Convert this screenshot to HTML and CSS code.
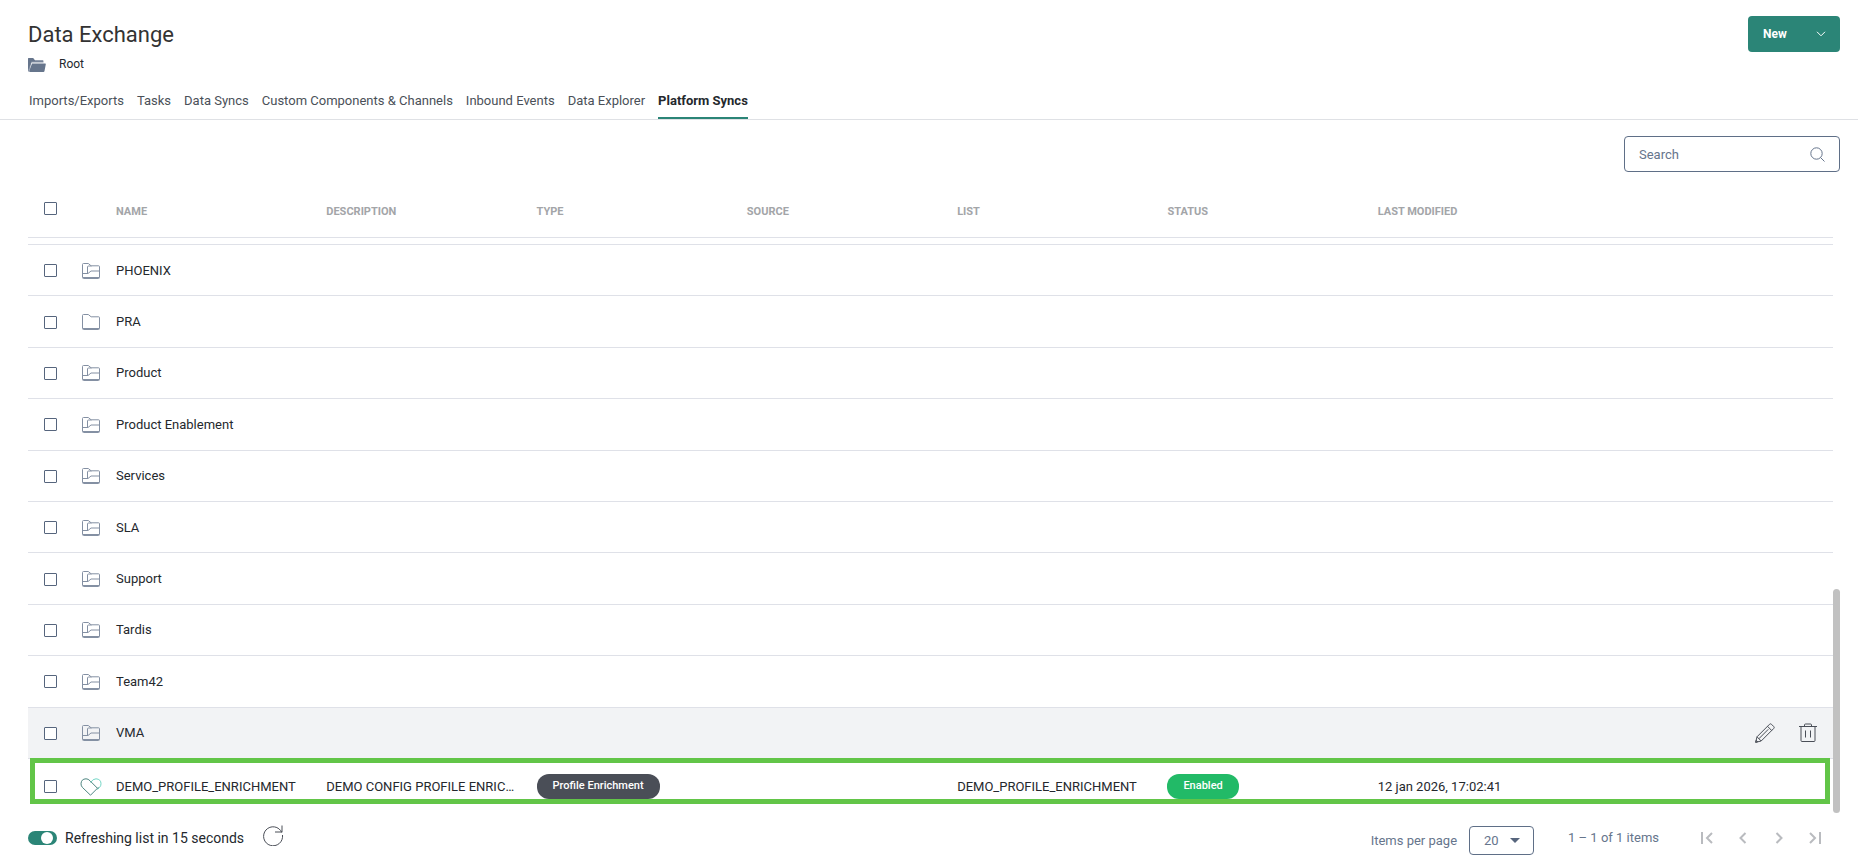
FILE: index.html
```html
<!DOCTYPE html>
<html lang="en">
<head>
    <meta charset="utf-8">
    <title>Data Exchange</title>
    <link rel="stylesheet" href="styles.css">
</head>
<body>

    <!-- Icons shared by the rows -->
    <svg class="sprite" aria-hidden="true">
        <symbol id="folder" viewBox="0 0 20 18">
            <path d="M1.500 15.500v-13q0-1 1-1h4.800l2.800 2.300h7.600q.8 0 .8.8v10.900q0 1-1 1h-15q-1 0-1-1z"/>
            <path d="M2 15.500h16"/>
        </symbol>
        <symbol id="folder-tree" viewBox="0 0 20 18">
            <path d="M1.500 15.500v-13q0-1 1-1h4.800l2.800 2.300h7.600q.8 0 .8.8v10.900q0 1-1 1h-15q-1 0-1-1z"/>
            <path d="M2 15.500h16M6.500 11v-6q0-1 1-1h3M1.500 11.500h5.500l3-2.500h8.500"/>
        </symbol>
    </svg>

    <header class="header">
        <div class="header-top">
            <div>
                <h1>Data Exchange</h1>
                <div class="path">
                    <svg width="18" height="14" viewBox="0 0 18 14"><path fill="#8793a6" d="M0 1q0-1 1-1h4l2 2.500h8.500v2h-12L1.500 12 1 14 0 13z"/><path fill="#66758c" d="M0 1q0-1 1-1h4l2 2.500h8v1H3.500L1 10 0 12zM4 5.500h13.200q.8 0 .6.800L16.500 13q-.2 1-1 1H2q-1 0-.8-1z"/></svg>
                    <span>Root</span>
                </div>
            </div>
            <div class="split">
                <button type="button" class="new">New</button>
                <button type="button" class="more" aria-label="More"><svg width="10" height="6" viewBox="0 0 10 6"><path d="M1 .8l4 4 4-4"/></svg></button>
            </div>
        </div>
        <nav class="tabs">
            <a href="#">Imports/Exports</a>
            <a href="#">Tasks</a>
            <a href="#">Data Syncs</a>
            <a href="#">Custom Components &amp; Channels</a>
            <a href="#">Inbound Events</a>
            <a href="#">Data Explorer</a>
            <a href="#" class="active">Platform Syncs</a>
        </nav>
    </header>

    <main class="main">
        <div class="search">
            <input type="text" placeholder="Search" aria-label="Search">
            <svg width="15" height="15" viewBox="0 0 15 15"><circle cx="6.500" cy="6.500" r="5.700"/><path d="M10.500 10.500l4 4"/></svg>
        </div>

        <div class="list">
            <table>
                <colgroup>
                    <col class="col-check"><col class="col-icon">
                    <col><col><col><col><col><col><col>
                    <col class="col-actions">
                </colgroup>
                <thead>
                    <tr>
                        <th class="check"><input type="checkbox" aria-label="Select all"></th>
                        <th></th>
                        <th>NAME</th>
                        <th>DESCRIPTION</th>
                        <th>TYPE</th>
                        <th>SOURCE</th>
                        <th>LIST</th>
                        <th>STATUS</th>
                        <th>LAST MODIFIED</th>
                        <th></th>
                    </tr>
                </thead>
                <tbody>
                    <tr class="clipped"><td colspan="10"></td></tr>
                    <tr>
                        <td class="check"><input type="checkbox" aria-label="PHOENIX"></td>
                        <td class="icon"><svg class="folder"><use href="#folder-tree"/></svg></td>
                        <td colspan="8">PHOENIX</td>
                    </tr>
                    <tr>
                        <td class="check"><input type="checkbox" aria-label="PRA"></td>
                        <td class="icon"><svg class="folder"><use href="#folder"/></svg></td>
                        <td colspan="8">PRA</td>
                    </tr>
                    <tr>
                        <td class="check"><input type="checkbox" aria-label="Product"></td>
                        <td class="icon"><svg class="folder"><use href="#folder-tree"/></svg></td>
                        <td colspan="8">Product</td>
                    </tr>
                    <tr>
                        <td class="check"><input type="checkbox" aria-label="Product Enablement"></td>
                        <td class="icon"><svg class="folder"><use href="#folder-tree"/></svg></td>
                        <td colspan="8">Product Enablement</td>
                    </tr>
                    <tr>
                        <td class="check"><input type="checkbox" aria-label="Services"></td>
                        <td class="icon"><svg class="folder"><use href="#folder-tree"/></svg></td>
                        <td colspan="8">Services</td>
                    </tr>
                    <tr>
                        <td class="check"><input type="checkbox" aria-label="SLA"></td>
                        <td class="icon"><svg class="folder"><use href="#folder-tree"/></svg></td>
                        <td colspan="8">SLA</td>
                    </tr>
                    <tr>
                        <td class="check"><input type="checkbox" aria-label="Support"></td>
                        <td class="icon"><svg class="folder"><use href="#folder-tree"/></svg></td>
                        <td colspan="8">Support</td>
                    </tr>
                    <tr>
                        <td class="check"><input type="checkbox" aria-label="Tardis"></td>
                        <td class="icon"><svg class="folder"><use href="#folder-tree"/></svg></td>
                        <td colspan="8">Tardis</td>
                    </tr>
                    <tr>
                        <td class="check"><input type="checkbox" aria-label="Team42"></td>
                        <td class="icon"><svg class="folder"><use href="#folder-tree"/></svg></td>
                        <td colspan="8">Team42</td>
                    </tr>
                    <tr class="hovered">
                        <td class="check"><input type="checkbox" aria-label="VMA"></td>
                        <td class="icon"><svg class="folder"><use href="#folder-tree"/></svg></td>
                        <td colspan="7">VMA</td>
                        <td>
                            <div class="actions">
                                <button type="button" aria-label="Edit"><svg width="20" height="20" viewBox="0 0 20 20"><path d="M.7 19.300l1.300-5.500L14.500 1.300q1-1 2 0l2.200 2.200q1 1 0 2L6.200 18zM2 13.800L6.200 18M12.500 3.300l4.200 4.200M3.800 15.800l9.500-9.500M.7 19.300l2-.5-1.500-1.500z"/></svg></button>
                                <button type="button" aria-label="Delete"><svg width="18" height="20" viewBox="0 0 18 20"><path d="M0 3.500h18M5.500 3.500v-1.500q0-1 1-1h5q1 0 1 1v1.500M2 3.500v14q0 1 1 1h12q1 0 1-1v-14M6.500 7.500v7M11.500 7.500v7"/></svg></button>
                            </div>
                        </td>
                    </tr>
                    <tr class="last">
                        <td class="check"><input type="checkbox" aria-label="DEMO_PROFILE_ENRICHMENT"></td>
                        <td class="icon"><svg class="heart" width="22" height="18" viewBox="0 0 22 18"><path stroke="#74d6c6" d="M10.500 4.500Q13 .8 16 .8q5 .4 5 5 0 2-1.500 3.700l-2 2"/><path stroke="#4d8580" d="M10.500 17.200L2.500 9.500Q1 8 1 5.800 1.200 1 6 .8q2.300 0 4 2l7.500 7.500M10.500 17.200l8-8"/></svg></td>
                        <td>DEMO_PROFILE_ENRICHMENT</td>
                        <td>DEMO CONFIG PROFILE ENRICHMENT</td>
                        <td><span class="badge">Profile Enrichment</span></td>
                        <td></td>
                        <td>DEMO_PROFILE_ENRICHMENT</td>
                        <td><span class="badge enabled">Enabled</span></td>
                        <td>12 jan 2026, 17:02:41</td>
                        <td></td>
                    </tr>
                </tbody>
            </table>
            <div class="scrollbar"></div>
            <div class="highlight"></div>
        </div>
    </main>

    <footer class="footer">
        <label class="refresh"><input type="checkbox" class="toggle" checked>Refreshing list in 15 seconds</label>
        <button type="button" class="reload" aria-label="Refresh"><svg width="22" height="22" viewBox="0 0 22 22"><path d="M19.800 8.500A9.500 9.500 0 1 0 20.500 11M20 1.500v6.500h-7"/></svg></button>
        <div class="paging">
            <label class="per-page">Items per page
                <span class="select"><select><option>20</option></select></span>
            </label>
            <span class="range">1 – 1 of 1 items</span>
            <div class="pages">
                <button type="button" aria-label="First page"><svg viewBox="0 0 12 12"><path d="M1 0v12M11 1L6 6l5 5"/></svg></button>
                <button type="button" aria-label="Previous page"><svg viewBox="0 0 12 12"><path d="M8.500 1l-5 5 5 5"/></svg></button>
                <button type="button" aria-label="Next page"><svg viewBox="0 0 12 12"><path d="M3.500 1l5 5-5 5"/></svg></button>
                <button type="button" aria-label="Last page"><svg viewBox="0 0 12 12"><path d="M11 0v12M1 1l5 5-5 5"/></svg></button>
            </div>
        </div>
    </footer>

</body>
</html>
```
FILE: styles.css
```css
* {
    box-sizing: border-box;
}

body {
    display: flex;
    flex-direction: column;
    height: 100vh;
    margin: 0;
    overflow: hidden;
    background: #fff;
    color: #24282d;
    font-family: Roboto, sans-serif;
    font-size: 13px;
}

button {
    padding: 0;
    border: none;
    background: none;
    font-family: inherit;
    cursor: pointer;
}

svg {
    display: block;
    fill: none;
}

.sprite {
    position: absolute;
    width: 0;
    height: 0;
}

/* Header */

.header {
    border-bottom: 1px solid #dfe1e5;
}

.header-top {
    display: flex;
    justify-content: space-between;
    height: 87px;
    padding: 16px 18px 0 28px;
}

h1 {
    margin: 5px 0 7px;
    color: #333;
    font-size: 22px;
    font-weight: 400;
    line-height: 28px;
}

.path {
    display: flex;
    align-items: center;
    gap: 13px;
    font-size: 12px;
    line-height: 17px;
}

.split {
    display: flex;
    height: 36px;
}

.split button {
    background: #2b8577;
    color: #fff;
    font-size: 12px;
    font-weight: 700;
}

.split .new {
    width: 54px;
    border-radius: 4px 0 0 4px;
}

.split .more {
    display: flex;
    align-items: center;
    justify-content: center;
    width: 38px;
    border-radius: 0 4px 4px 0;
}

.more svg {
    stroke: #fff;
}

.tabs {
    display: flex;
    gap: 13px;
    padding: 0 29px;
}

.tabs a {
    height: 32px;
    color: #4a5058;
    line-height: 28px;
    text-decoration: none;
}

.tabs .active {
    border-bottom: 2px solid #2b8577;
    color: #24282d;
    font-weight: 700;
}

/* List */

.main {
    display: flex;
    flex: 1;
    flex-direction: column;
    min-height: 0;
    padding: 16px 18px 0 28px;
}

.search {
    display: flex;
    align-items: center;
    align-self: flex-end;
    width: 216px;
    height: 36px;
    padding: 0 14px;
    border: 1px solid #5f6f87;
    border-radius: 4px;
}

.search input {
    flex: 1;
    min-width: 0;
    padding: 0;
    border: none;
    outline: none;
    font-family: inherit;
    font-size: 13px;
}

.search input::placeholder {
    color: #66758c;
}

.search svg {
    stroke: #66758c;
}

.list {
    position: relative;
    display: flex;
    flex: 1;
    min-height: 0;
    margin-top: 8px;
}

/* rows without a height of their own share what is left */
table {
    flex: 1;
    width: 100%;
    height: 100%;
    table-layout: fixed;
    border-collapse: separate;
    border-spacing: 0;
}

.col-check {
    width: 43px;
}

.col-icon {
    width: 37px;
}

.col-actions {
    width: 253px;
}

th,
td {
    padding: 0 8px;
    border-bottom: 1px solid #dfe1e8;
    text-align: left;
    vertical-align: middle;
    white-space: nowrap;
    overflow: hidden;
    text-overflow: ellipsis;
}

th {
    height: 58px;
    padding-top: 5px;
    color: #a3a5a8;
    font-size: 11px;
    font-weight: 700;
}

.check {
    padding: 1px 0 0 16px;
}

th.check {
    padding-top: 0;
}

.icon {
    padding: 1px 0 0 10px;
}

.check input {
    display: block;
    width: 13px;
    height: 13px;
    margin: 0;
    border: 1px solid #56657d;
    border-radius: 1px;
    background: #fff;
    appearance: none;
}

.clipped td {
    height: 7px;
}

.hovered td {
    background: #f2f3f5;
}

.last td {
    height: 54px;
    border-bottom: none;
}

.folder {
    width: 20px;
    height: 18px;
    stroke: #8490a3;
}

.last .icon {
    padding-left: 9px;
}

.actions {
    display: flex;
    align-items: center;
    justify-content: flex-end;
    gap: 24px;
    height: 18px;
    padding-right: 8px;
}

.hovered td:last-child {
    overflow: visible;
}

.actions svg {
    stroke: #4a4e57;
}

.badge {
    display: inline-block;
    height: 25px;
    padding: 0 16px;
    border-radius: 12px;
    background: #4a4e57;
    color: #fff;
    font-size: 11px;
    font-weight: 500;
    line-height: 23px;
    vertical-align: middle;
}

.badge.enabled {
    background: #22ba67;
}

.scrollbar {
    flex: none;
    align-self: flex-end;
    width: 7px;
    height: 224px;
    border-radius: 4px;
    background: #c1c1c1;
}

/* frame drawn over the last row */
.highlight {
    position: absolute;
    right: 10px;
    bottom: 9px;
    left: 2px;
    height: 46px;
    border: 5px solid #62c548;
    pointer-events: none;
}

/* Footer */

.footer {
    display: flex;
    align-items: flex-start;
    height: 42px;
    padding: 0 25px 0 28px;
}

.refresh {
    display: flex;
    align-items: center;
    gap: 8px;
    height: 50px;
    font-size: 14px;
}

.toggle {
    display: flex;
    justify-content: flex-end;
    width: 29px;
    height: 14px;
    margin: 0;
    padding: 1px 4px;
    border-radius: 7px;
    background: #2b8577;
    appearance: none;
}

.toggle::before {
    width: 12px;
    height: 12px;
    border-radius: 50%;
    background: #fff;
    content: "";
}

.reload {
    margin: 11px 0 0 18px;
}

.reload svg {
    stroke: #4a4e57;
}

.paging {
    display: flex;
    align-items: flex-start;
    margin-left: auto;
    color: #66758c;
    font-size: 13px;
}

.per-page {
    display: flex;
    align-items: center;
    gap: 12px;
    height: 29px;
    margin-top: 13px;
}

.select {
    position: relative;
}

.select::after {
    position: absolute;
    top: 12px;
    right: 14px;
    border: 5px solid transparent;
    border-top-color: #56657d;
    border-bottom: none;
    content: "";
}

select {
    display: block;
    width: 65px;
    height: 29px;
    padding: 0 14px;
    border: 1px solid #5f6f87;
    border-radius: 4px;
    background: #fff;
    color: #66758c;
    font-family: inherit;
    font-size: 13px;
    appearance: none;
}

.range {
    margin-left: 34px;
    line-height: 50px;
}

.pages {
    display: flex;
    margin-left: 30px;
}

.pages button {
    display: flex;
    align-items: center;
    justify-content: center;
    width: 36px;
    height: 50px;
}

.pages svg {
    width: 12px;
    height: 12px;
    stroke: #b9bbbf;
    stroke-width: 2;
}
```
